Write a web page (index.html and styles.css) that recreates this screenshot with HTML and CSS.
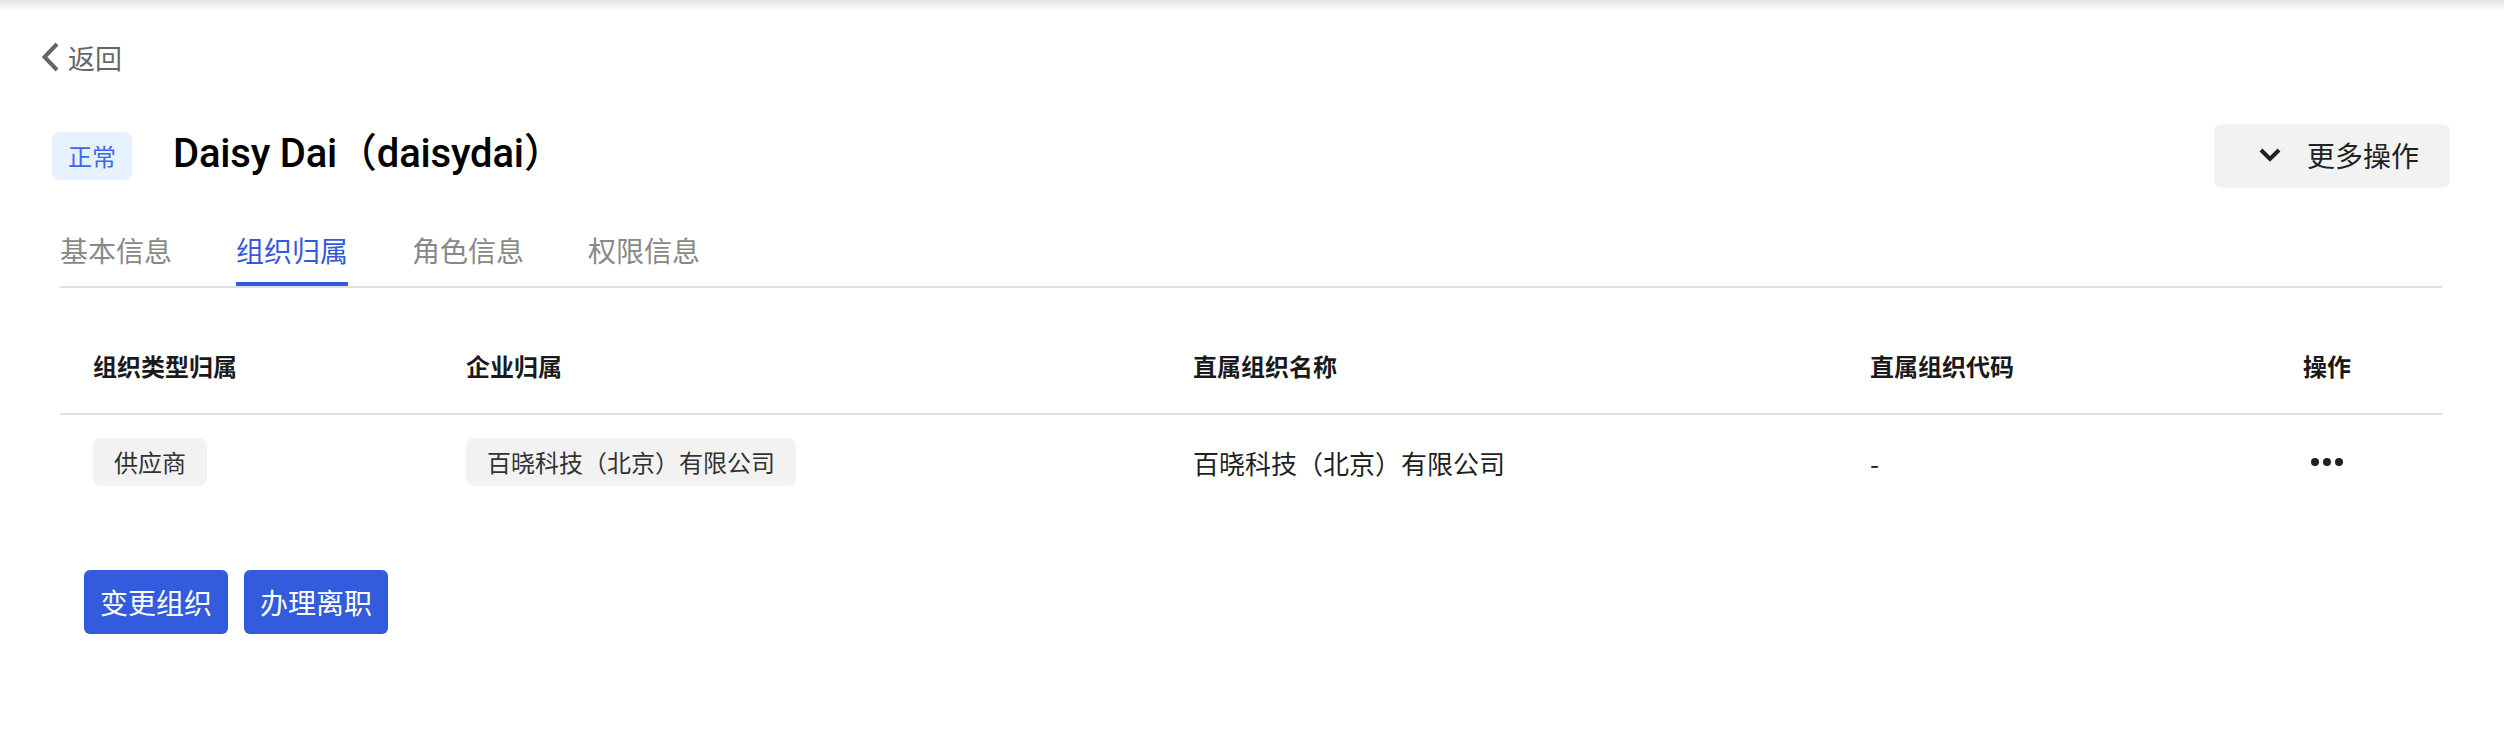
FILE: index.html
```html
<!DOCTYPE html>
<html lang="zh-CN">
<head>
<meta charset="utf-8">
<title>组织归属</title>
<link rel="stylesheet" href="styles.css">
</head>
<body>
<div class="top-shadow"></div>
<div class="page">
  <a class="back" href="#">
    <svg class="back-icon" width="18" height="30" viewBox="0 0 18 30"><polyline points="16,2 3.5,15 16,28" fill="none" stroke="#666666" stroke-width="4" stroke-linejoin="miter"/></svg>
    <span>返回</span>
  </a>

  <div class="head">
    <div class="head-left">
      <span class="status">正常</span>
      <h1 class="title">Daisy Dai（daisydai）</h1>
    </div>
    <button class="more">
      <svg class="more-icon" width="24" height="16" viewBox="0 0 24 16"><polyline points="3,3 12,12 21,3" fill="none" stroke="#222" stroke-width="4"/></svg>
      <span>更多操作</span>
    </button>
  </div>

  <div class="tabs">
    <div class="tab">基本信息</div>
    <div class="tab active">组织归属</div>
    <div class="tab">角色信息</div>
    <div class="tab">权限信息</div>
  </div>

  <table class="grid">
    <colgroup>
      <col class="c1"><col class="c2"><col class="c3"><col class="c4"><col class="c5">
    </colgroup>
    <thead>
      <tr>
        <th>组织类型归属</th>
        <th>企业归属</th>
        <th>直属组织名称</th>
        <th>直属组织代码</th>
        <th>操作</th>
      </tr>
    </thead>
    <tbody>
      <tr>
        <td><span class="chip">供应商</span></td>
        <td><span class="chip">百晓科技（北京）有限公司</span></td>
        <td>百晓科技（北京）有限公司</td>
        <td>-</td>
        <td><svg class="dots" width="32" height="8" viewBox="0 0 32 8"><circle cx="4" cy="4" r="4" fill="#222"/><circle cx="16" cy="4" r="4" fill="#222"/><circle cx="28" cy="4" r="4" fill="#222"/></svg></td>
      </tr>
    </tbody>
  </table>

  <div class="actions">
    <button class="primary">变更组织</button>
    <button class="primary">办理离职</button>
  </div>
</div>
</body>
</html>
```

FILE: styles.css
```css
html, body {
  margin: 0;
  padding: 0;
  background: #ffffff;
}

body {
  font-family: "Liberation Sans", "Noto Sans CJK SC", sans-serif;
  color: #1f1f1f;
  position: relative;
}

.top-shadow {
  position: absolute;
  top: 0;
  left: 0;
  right: 0;
  height: 10px;
  background: linear-gradient(#e2e2e2, rgba(255, 255, 255, 0));
}

.page {
  padding: 35px 62px 0 60px;
}

.back {
  display: flex;
  align-items: center;
  height: 44px;
  margin-left: -19px;
  gap: 9px;
  color: #666666;
  text-decoration: none;
  font-family: "Noto Sans CJK SC", sans-serif;
  font-size: 27px;
}

.back-icon {
  display: block;
}

.head {
  display: flex;
  align-items: center;
  justify-content: space-between;
  height: 64px;
  margin-top: 45px;
  margin-left: -8px;
  margin-right: -8px;
}

.head-left {
  display: flex;
  align-items: center;
}

.status {
  display: inline-block;
  height: 48px;
  line-height: 48px;
  padding: 0 16px;
  border-radius: 8px;
  background: #e7f2fe;
  color: #3b66ee;
  font-family: "Noto Sans CJK SC", sans-serif;
  font-size: 24px;
}

.title {
  margin: 0 0 0 41px;
  padding-bottom: 5px;
  line-height: 48px;
  font-family: Roboto, "Noto Sans CJK SC", sans-serif;
  font-weight: 500;
  font-size: 40px;
  color: #000000;
  letter-spacing: -0.2px;
}

.more {
  display: flex;
  align-items: center;
  height: 64px;
  padding: 0 31px 2px 44px;
  border: none;
  border-radius: 8px;
  background: #f2f2f2;
  color: #222222;
  font-family: "Noto Sans CJK SC", sans-serif;
  font-size: 28px;
  gap: 25px;
}

.more-icon {
  display: block;
}

.tabs {
  display: flex;
  gap: 64px;
  margin-top: 42px;
  border-bottom: 2px solid #e1e1e1;
}

.tab {
  font-family: "Noto Sans CJK SC", sans-serif;
  font-size: 28px;
  line-height: 40px;
  color: #888888;
  padding-bottom: 12px;
  border-bottom: 4px solid transparent;
}

.tab.active {
  color: #3359df;
  border-bottom-color: #3359df;
}

.grid {
  width: 100%;
  margin-top: 29px;
  border-collapse: collapse;
  table-layout: fixed;
  font-family: "Noto Sans CJK SC", sans-serif;
}

.c1 { width: 373px; }
.c2 { width: 727px; }
.c3 { width: 677px; }
.c4 { width: 433px; }

.grid th {
  height: 96px;
  padding: 0 0 0 33px;
  text-align: left;
  font-size: 24px;
  font-weight: 700;
  color: #1a1a1a;
  border-bottom: 2px solid #e1e1e1;
}

.grid td {
  height: 94px;
  padding: 0 0 0 33px;
  font-size: 26px;
  color: #1f1f1f;
}

.chip {
  display: inline-block;
  height: 48px;
  line-height: 48px;
  padding: 0 21px;
  border-radius: 8px;
  background: #f2f2f2;
  color: #333333;
  font-size: 24px;
}

.dots {
  display: block;
  margin-left: 8px;
}

.actions {
  display: flex;
  gap: 16px;
  margin-top: 61px;
  margin-left: 24px;
}

.primary {
  height: 64px;
  padding: 0 16px;
  border: none;
  border-radius: 6px;
  background: #335bdd;
  color: #ffffff;
  font-family: "Noto Sans CJK SC", sans-serif;
  font-size: 28px;
}
```
